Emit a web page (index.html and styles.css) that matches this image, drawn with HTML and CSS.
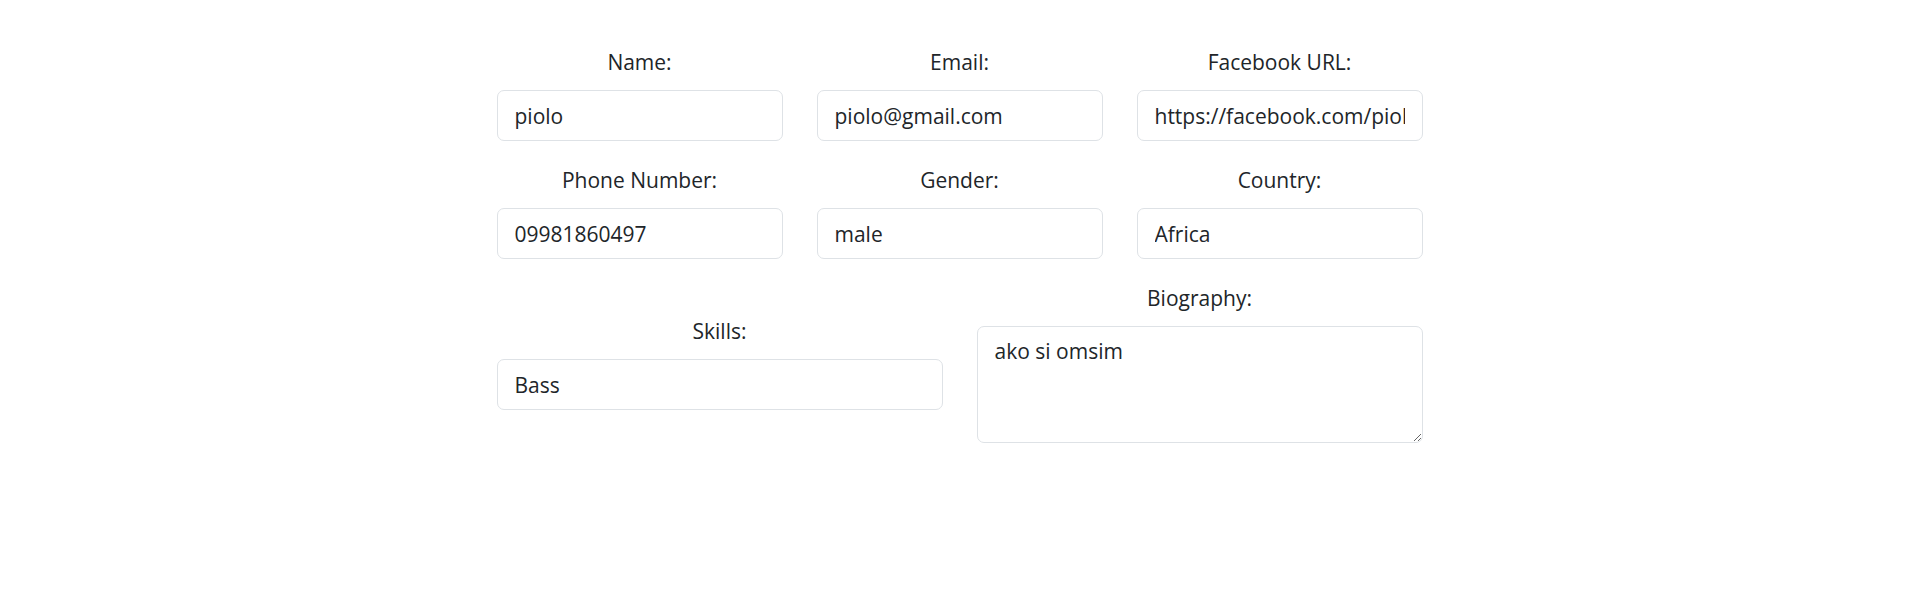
FILE: index.html
```html
<!DOCTYPE html>
<html lang="en">
<head>
<meta charset="utf-8">
<title>Profile</title>
<link rel="stylesheet" href="styles.css">
</head>
<body>
<main class="page">
  <form class="profile">
    <div class="row row-3">
      <div class="field">
        <label class="label" for="name">Name:</label>
        <input class="control" id="name" type="text" value="piolo">
      </div>
      <div class="field">
        <label class="label" for="email">Email:</label>
        <input class="control" id="email" type="text" value="piolo@gmail.com">
      </div>
      <div class="field">
        <label class="label" for="fb">Facebook URL:</label>
        <input class="control" id="fb" type="text" value="https://facebook.com/piolo">
      </div>
    </div>
    <div class="row row-3">
      <div class="field">
        <label class="label" for="phone">Phone Number:</label>
        <input class="control" id="phone" type="text" value="09981860497">
      </div>
      <div class="field">
        <label class="label" for="gender">Gender:</label>
        <input class="control" id="gender" type="text" value="male">
      </div>
      <div class="field">
        <label class="label" for="country">Country:</label>
        <input class="control" id="country" type="text" value="Africa">
      </div>
    </div>
    <div class="row row-2">
      <div class="field">
        <label class="label" for="skills">Skills:</label>
        <input class="control" id="skills" type="text" value="Bass">
      </div>
      <div class="field">
        <label class="label" for="bio">Biography:</label>
        <textarea class="control area" id="bio">ako si omsim</textarea>
      </div>
    </div>
  </form>
</main>
</body>
</html>
```

FILE: styles.css
```css
html, body {
  margin: 0;
  padding: 0;
  background: #ffffff;
}

body {
  font-family: "Open Sans", "Noto Sans", "Liberation Sans", sans-serif;
  font-size: 21px;
  line-height: 1.5;
  color: #212529;
}

.page {
  padding-top: 47px;
}

.profile {
  width: 926px;
  margin: 0 auto;
  display: flex;
  flex-direction: column;
  gap: 24px;
}

.row {
  display: grid;
  column-gap: 34px;
}

.row-3 {
  grid-template-columns: 1fr 1fr 1fr;
}

.row-2 {
  grid-template-columns: 1fr 1fr;
  align-items: center;
}

.field {
  display: flex;
  flex-direction: column;
  min-width: 0;
}

.label {
  display: block;
  text-align: center;
  margin-bottom: 11.5px;
}

.control {
  display: block;
  box-sizing: border-box;
  width: 100%;
  margin: 0;
  font-family: inherit;
  font-size: 21px;
  line-height: 1.5;
  color: #212529;
  background: #ffffff;
  border: 1px solid #dee2e6;
  border-radius: 7px;
  padding: 8.75px 17px;
  height: 51px;
  outline: none;
}

.area {
  height: 117px;
  resize: vertical;
}
```
